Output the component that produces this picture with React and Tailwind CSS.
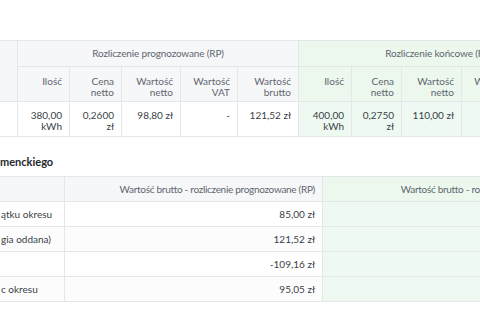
import React from "react";

const font = { fontFamily: "Lato, 'Noto Sans', sans-serif" };

function H({ children, className = "" }) {
  return (
    <th
      className={`border border-[#e4e6e9] px-[7px] align-top text-right font-normal text-[#5f6670] ${className}`}
    >
      {children}
    </th>
  );
}

function D({ children, className = "" }) {
  return (
    <td
      className={`border border-[#e4e6e9] px-[7px] pt-[8px] align-top text-right text-[#3a3f46] ${className}`}
    >
      {children}
    </td>
  );
}

export default function App() {
  const g = "bg-[#eefaf1]";
  const gh = "bg-[#ecf8ee]";
  const gr = "bg-[#f6f7f8]";
  return (
    <div className="w-[480px] h-[320px] overflow-hidden bg-white" style={font}>
      <div className="pt-[40px] w-[600px] text-[10px] leading-[11px]">
        <table className="table-fixed border-collapse w-[579px] -ml-[1px]">
          <colgroup>
            <col className="w-[18px]" />
            <col className="w-[52px]" />
            <col className="w-[52px]" />
            <col className="w-[59px]" />
            <col className="w-[57px]" />
            <col className="w-[61px]" />
            <col className="w-[53px]" />
            <col className="w-[50px]" />
            <col className="w-[60px]" />
            <col className="w-[57px]" />
            <col className="w-[61px]" />
          </colgroup>
          <thead>
            <tr className="h-[26px]">
              <th rowSpan={2} className={`border border-[#e4e6e9] ${gr}`}></th>
              <th
                colSpan={5}
                className={`border border-[#e4e6e9] ${gr} text-center align-middle font-normal text-[#5f6670] tracking-[-0.15px]`}
              >
                Rozliczenie prognozowane (RP)
              </th>
              <th
                colSpan={5}
                className={`border border-[#e4e6e9] ${gh} text-center align-middle font-normal text-[#5f6670] tracking-[-0.15px]`}
              >
                Rozliczenie końcowe (RK)
              </th>
            </tr>
            <tr className="h-[35px]">
              <H className={`pt-[9px] ${gr}`}>Ilość</H>
              <H className={`pt-[9px] ${gr}`}>Cena netto</H>
              <H className={`pt-[9px] ${gr}`}>Wartość netto</H>
              <H className={`pt-[9px] ${gr}`}>Wartość VAT</H>
              <H className={`pt-[9px] ${gr}`}>Wartość brutto</H>
              <H className={`pt-[9px] ${gh}`}>Ilość</H>
              <H className={`pt-[9px] ${gh}`}>Cena netto</H>
              <H className={`pt-[9px] ${gh}`}>Wartość netto</H>
              <H className={`pt-[9px] ${gh}`}>Wartość VAT</H>
              <H className={`pt-[9px] ${gh}`}>Wartość brutto</H>
            </tr>
          </thead>
          <tbody>
            <tr className="h-[35px]">
              <D></D>
              <D>380,00 kWh</D>
              <D>0,2600 zł</D>
              <D>98,80 zł</D>
              <D>-</D>
              <D>121,52 zł</D>
              <D className={g}>400,00 kWh</D>
              <D className={g}>0,2750 zł</D>
              <D className={g}>110,00 zł</D>
              <D className={g}>-</D>
              <D className={g}>110,00 zł</D>
            </tr>
          </tbody>
        </table>

        <div className="mt-[18px] h-[13px] text-[11px] leading-[13px] font-bold text-[#23272d]">
          menckiego
        </div>

        <table className="mt-[8px] table-fixed border-collapse w-[581px] -ml-[1px]">
          <colgroup>
            <col className="w-[65px]" />
            <col className="w-[258px]" />
            <col className="w-[258px]" />
          </colgroup>
          <thead>
            <tr className="h-[25px]">
              <th className={`border border-[#e4e6e9] ${gr}`}></th>
              <th className={`border border-[#e4e6e9] ${gr} px-[7px] text-right align-middle font-normal text-[#5f6670] whitespace-nowrap tracking-[-0.3px]`}>
                Wartość brutto - rozliczenie prognozowane (RP)
              </th>
              <th className={`border border-[#e4e6e9] ${gh} px-[7px] text-right align-middle font-normal text-[#5f6670] whitespace-nowrap tracking-[-0.3px]`}>
                Wartość brutto - rozliczenie końcowe (RK)
              </th>
            </tr>
          </thead>
          <tbody className="text-[#3a3f46]">
            {[
              ["ątku okresu", "85,00 zł", "bg-white"],
              ["gia oddana)", "121,52 zł", "bg-[#fcfcfd]"],
              ["", "-109,16 zł", "bg-white"],
              ["c okresu", "95,05 zł", "bg-[#fcfcfd]"],
            ].map(([l, v, bg], i) => (
              <tr key={i} className="h-[25px]">
                <td className={`border border-[#e4e6e9] ${bg} pl-[1px] align-middle whitespace-nowrap`}>
                  {l}
                </td>
                <td className={`border border-[#e4e6e9] ${bg} px-[7px] text-right align-middle whitespace-nowrap`}>
                  {v}
                </td>
                <td className={`border border-[#e4e6e9] ${g}`}></td>
              </tr>
            ))}
          </tbody>
        </table>
      </div>
    </div>
  );
}
